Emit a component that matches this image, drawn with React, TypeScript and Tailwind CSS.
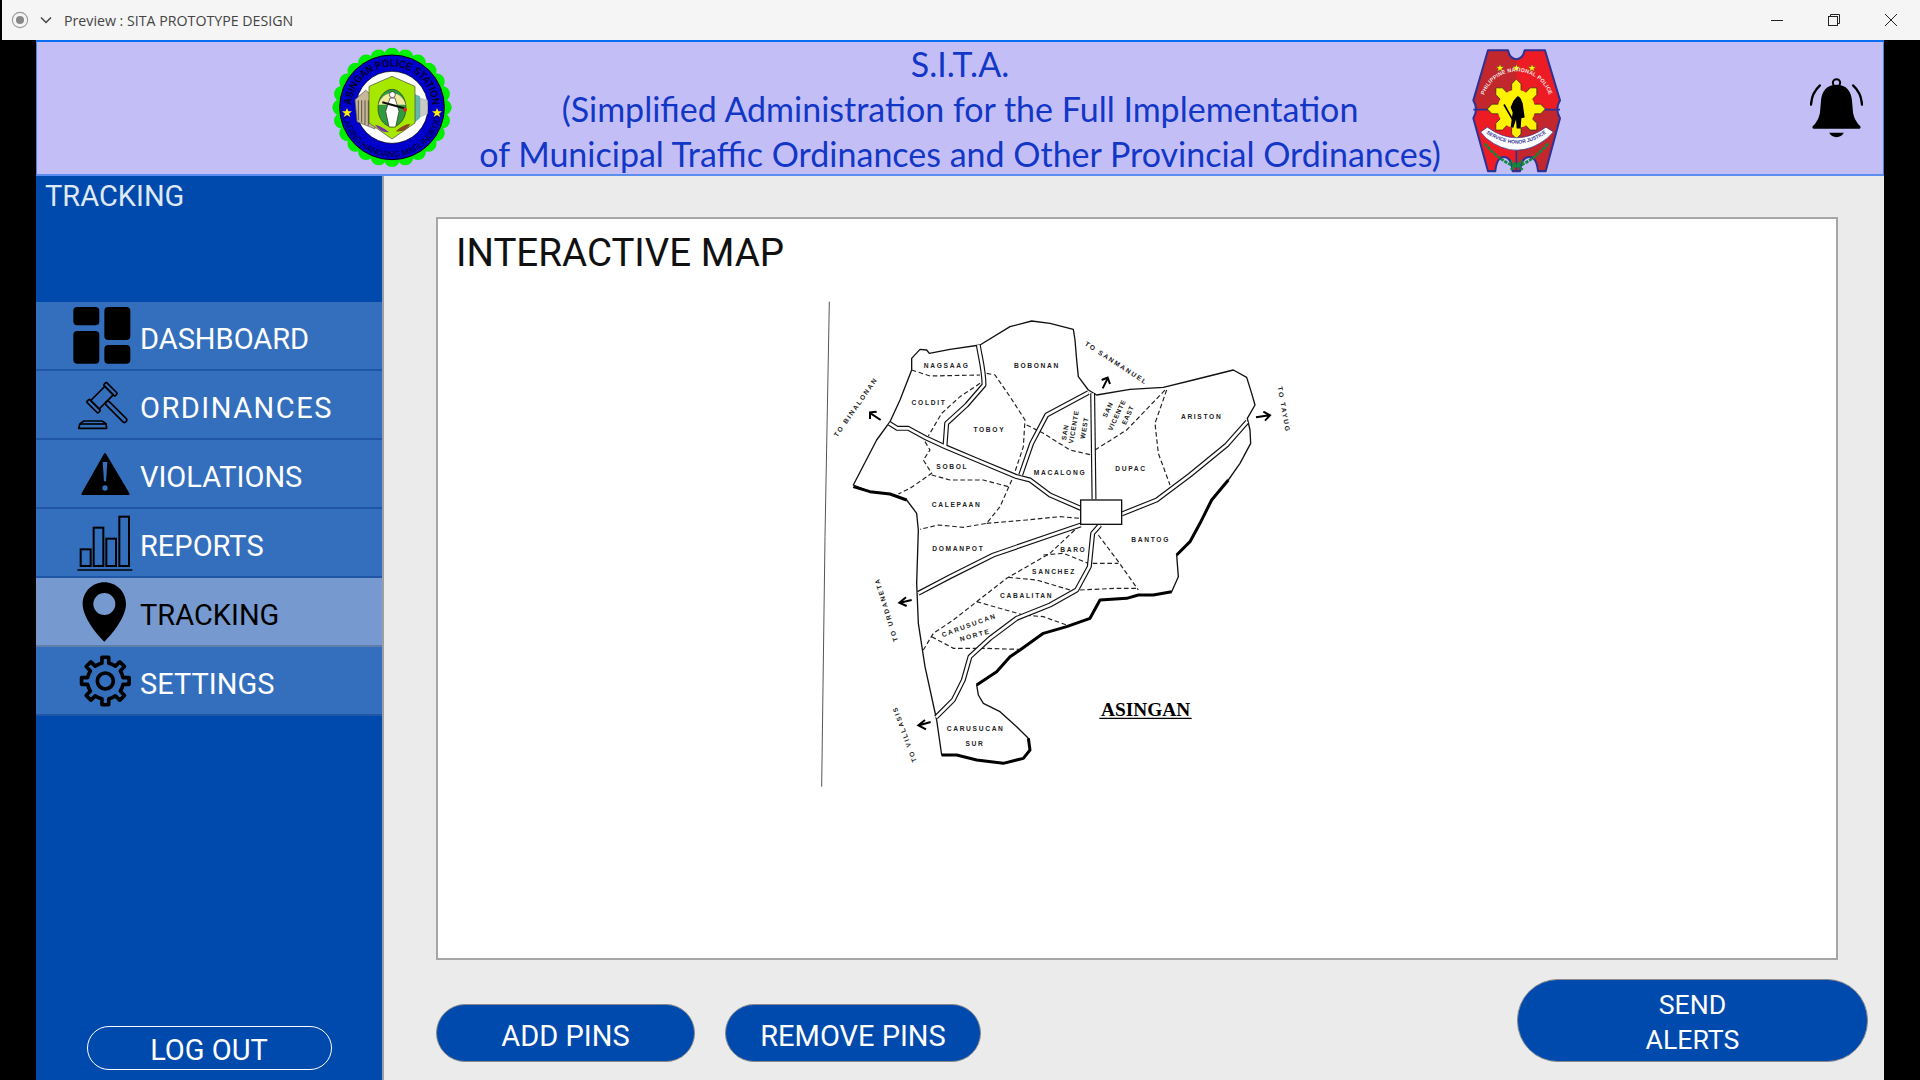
import React from 'react';

const navItems = ['DASHBOARD', 'ORDINANCES', 'VIOLATIONS', 'REPORTS', 'TRACKING', 'SETTINGS'];

// gear outline built from 8 teeth
const gearPath = (cx: number, cy: number, outer: number, inner: number) => {
  const pts: string[] = [];
  const teeth = 8;
  for (let i = 0; i < teeth; i++) {
    const a = (i * 360) / teeth - 90;
    const offs: [number, number][] = [
      [-22.5, inner],
      [-11, inner],
      [-8, outer],
      [8, outer],
      [11, inner],
    ];
    offs.forEach(([d, r]) => {
      const t = ((a + d) * Math.PI) / 180;
      pts.push(`${(cx + r * Math.cos(t)).toFixed(1)},${(cy + r * Math.sin(t)).toFixed(1)}`);
    });
  }
  return `M${pts.join(' L')} Z`;
};

const NavIcon = ({ name }: { name: string }) => {
  const cls = 'w-[62px] h-[68px] shrink-0 overflow-visible';
  if (name === 'DASHBOARD') {
    return (
      <svg viewBox="0 0 186 204" className={cls}>
        <rect x="10" y="15" width="78" height="55" rx="12" />
        <rect x="103" y="15" width="78" height="99" rx="12" />
        <rect x="10" y="87" width="78" height="98" rx="12" />
        <rect x="103" y="129" width="78" height="56" rx="12" />
      </svg>
    );
  }
  if (name === 'ORDINANCES') {
    return (
      <svg viewBox="0 0 186 204" className={cls} fill="none" stroke="#000" strokeWidth="5" strokeLinejoin="round">
        <g transform="translate(96 80) rotate(45)">
          <rect x="-18" y="-30" width="36" height="60" />
          <rect x="-24" y="-42" width="48" height="12" rx="3" />
          <rect x="-24" y="30" width="48" height="12" rx="3" />
          <rect x="18" y="-7" width="84" height="14" rx="7" />
        </g>
        <path d="M26,172 L110,172 L108,158 L96,150 L42,150 L30,158 Z" />
        <path d="M30,159 L108,159" />
      </svg>
    );
  }
  if (name === 'VIOLATIONS') {
    return (
      <svg viewBox="0 0 186 204" className={cls}>
        <path d="M105,42 L176,162 L37,162 Z" stroke="#000" strokeWidth="6" strokeLinejoin="round" />
        <path d="M98,66 L112,66 L108,124 L102,124 Z" fill="#346fbd" />
        <circle cx="105" cy="144" r="8" fill="#346fbd" />
      </svg>
    );
  }
  if (name === 'REPORTS') {
    return (
      <svg viewBox="0 0 186 204" className={cls} fill="none" stroke="#000" strokeWidth="6">
        <rect x="32" y="121" width="30" height="50" />
        <rect x="71" y="56" width="29" height="115" />
        <rect x="109" y="89" width="29" height="82" />
        <rect x="148" y="23" width="29" height="148" />
        <path d="M22,183 L187,183" strokeWidth="5" />
      </svg>
    );
  }
  if (name === 'TRACKING') {
    return (
      <svg viewBox="0 0 186 204" className={cls}>
        <path
          fillRule="evenodd"
          d="M103,13 C139,13 168,42 168,78 C168,118 125,170 103,191 C81,170 38,118 38,78 C38,42 67,13 103,13 Z M103,45 A33,33 0 1 0 103,111 A33,33 0 1 0 103,45 Z"
        />
      </svg>
    );
  }
  return (
    <svg viewBox="0 0 186 204" className={cls} fill="none" stroke="#000" strokeLinejoin="round">
      <path d={gearPath(106, 102, 72, 54)} strokeWidth="11" />
      <circle cx="106" cy="102" r="24" strokeWidth="11" />
    </svg>
  );
};

const Seal = () => {
  const scallops = Array.from({ length: 24 }, (_, i) => {
    const t = (i * 15 * Math.PI) / 180;
    return { x: 201 + 155 * Math.cos(t), y: 193 + 155 * Math.sin(t) };
  });
  return (
    <svg viewBox="0 0 402 390" className="w-[134px] h-[130px] shrink-0 -ml-[8px] -mr-[8px] font-['Liberation_Sans',sans-serif]">
      <defs>
        <path id="seal-top" d="M79,193 A122,122 0 1 1 323,193" />
        <path id="seal-bottom" d="M52,193 A149,149 0 0 0 350,193" />
      </defs>
      {scallops.map((s, i) => (
        <circle key={i} cx={s.x} cy={s.y} r="24" fill="#00ee00" />
      ))}
      <circle cx="201" cy="193" r="157" fill="#0000cc" stroke="#000" strokeWidth="3" />
      <circle cx="201" cy="193" r="108" fill="#fff" stroke="#000" strokeWidth="2" />
      <text fontSize="32" fontWeight="700" fill="#00002a">
        <textPath href="#seal-top" startOffset="50%" textAnchor="middle" textLength={370} lengthAdjust="spacingAndGlyphs">
          ASINGAN POLICE STATION
        </textPath>
      </text>
      <text fontSize="26" fill="#00002a">
        <textPath href="#seal-bottom" startOffset="50%" textAnchor="middle" textLength={410} lengthAdjust="spacingAndGlyphs">
          LAGING HANDANG MAGLINGKOD
        </textPath>
      </text>
      <polygon points="66,195 70,205 81,205 72,212 76,222 66,216 56,222 60,212 51,205 62,205" fill="#ffee00" />
      <polygon points="336,195 340,205 351,205 342,212 346,222 336,216 326,222 330,212 321,205 332,205" fill="#ffee00" />
      {/* building */}
      <path d="M90,170 L122,142 L150,165 L150,258 L96,236 Z" fill="#c9b79a" stroke="#554" strokeWidth="2" />
      <path d="M100,172 V232 M110,172 V238 M120,172 V244 M130,172 V248" stroke="#554" strokeWidth="3" />
      {/* tower */}
      <path d="M262,150 L285,160 L285,225 L262,245 Z" fill="#5fb8a8" />
      <path d="M285,165 L308,172 L308,212 L285,222 Z" fill="#c8ccc8" stroke="#888" />
      {/* shield */}
      <path d="M201,100 L270,130 L270,240 L201,288 L132,240 L132,130 Z" fill="#a6e800" stroke="#444" strokeWidth="2" />
      <ellipse cx="201" cy="195" rx="42" ry="56" fill="#2f9b3f" stroke="#333" strokeWidth="2" />
      <path d="M160,185 A42,44 0 0 1 242,185 Z" fill="#f3e9a0" />
      <path d="M195,165 L210,165 L222,205 L212,252 L192,252 L182,205 Z" fill="#fff" stroke="#222" strokeWidth="2" />
      <circle cx="202" cy="155" r="9" fill="#fff" stroke="#222" strokeWidth="2" />
      <path d="M172,178 L238,196" stroke="#111" strokeWidth="6" />
      <circle cx="240" cy="200" r="6" fill="#d22" />
      <path d="M150,245 Q172,250 192,268 Q165,268 150,245 Z" fill="#7a2fb0" />
      <path d="M212,265 Q232,245 256,242 Q245,268 212,265 Z" fill="#8a4a20" />
    </svg>
  );
};

const Badge = () => (
  <svg viewBox="0 0 312 396" preserveAspectRatio="none" className="w-[104px] h-[136px] shrink-0 -ml-[5px] mt-[3px] font-['Liberation_Sans',sans-serif]">
    <defs>
      <path id="pnp-arc" d="M54,190 A104,104 0 1 1 262,190" />
      <path id="pnp-ribbon" d="M62,262 Q157,330 252,262" />
      <clipPath id="pnp-clip">
        <path d="M72,24 L132,24 Q138,50 157,50 Q176,50 182,24 L243,24 L288,170 Q272,195 288,222 L245,376 L222,376 Q218,335 195,335 Q172,335 168,376 L146,376 Q142,335 120,335 Q98,335 94,376 L72,376 L28,222 Q44,195 28,170 Z" />
      </clipPath>
    </defs>
    <path
      d="M72,24 L132,24 Q138,50 157,50 Q176,50 182,24 L243,24 L288,170 Q272,195 288,222 L245,376 L222,376 Q218,335 195,335 Q172,335 168,376 L146,376 Q142,335 120,335 Q98,335 94,376 L72,376 L28,222 Q44,195 28,170 Z"
      fill="#ed1c24"
    />
    <g clipPath="url(#pnp-clip)">
      <rect x="0" y="0" width="157" height="197" fill="#c1272d" />
      <rect x="157" y="197" width="157" height="200" fill="#c1272d" />
    </g>
    <path d="M28,197 H288 M157,270 V376" stroke="#2e3192" strokeWidth="5" />
    <path
      d="M72,24 L132,24 Q138,50 157,50 Q176,50 182,24 L243,24 L288,170 Q272,195 288,222 L245,376 L222,376 Q218,335 195,335 Q172,335 168,376 L146,376 Q142,335 120,335 Q98,335 94,376 L72,376 L28,222 Q44,195 28,170 Z"
      fill="none"
      stroke="#2e3192"
      strokeWidth="6"
      strokeLinejoin="round"
    />
    {[108, 157, 204].map((x) => (
      <polygon
        key={x}
        points={`${x},64 ${x + 3},72 ${x + 12},72 ${x + 5},78 ${x + 8},86 ${x},81 ${x - 8},86 ${x - 5},78 ${x - 12},72 ${x - 3},72`}
        fill="#fff200"
        stroke="#333"
      />
    ))}
    <text fontSize="16" fontWeight="700" fill="#f6e6e6" letterSpacing="0.6">
      <textPath href="#pnp-arc" startOffset="50%" textAnchor="middle">PHILIPPINE NATIONAL POLICE</textPath>
    </text>
    {[0, 45, 90, 135, 180, 225, 270, 315].map((a) => (
      <polygon
        key={a}
        points="143,145 143,122 157,108 171,122 171,145"
        fill="#fff200"
        stroke="#222"
        strokeWidth="2"
        transform={`rotate(${a} 157 195)`}
      />
    ))}
    <circle cx="157" cy="195" r="56" fill="#fff200" />
    <path d="M160,158 C170,158 172,170 176,178 L182,220 L172,222 L170,252 L158,252 L156,226 L148,250 L140,248 L146,205 L140,190 L148,172 Z" />
    <path d="M120,182 L146,226" stroke="#000" strokeWidth="5" />
    <path d="M50,262 L70,248 Q157,310 246,248 L268,262 L250,280 Q157,350 66,280 Z" fill="#fff" stroke="#2e3192" strokeWidth="2" />
    <text fontSize="15" fontWeight="700" fill="#2e3192">
      <textPath href="#pnp-ribbon" startOffset="50%" textAnchor="middle">SERVICE HONOR JUSTICE</textPath>
    </text>
    <path d="M62,296 Q100,340 150,362 M252,296 Q214,340 164,362 M140,372 L176,346 M176,372 L140,346" fill="none" stroke="#0f8a3c" strokeWidth="8" strokeDasharray="10 3" />
  </svg>
);

const Bell = () => (
  <svg viewBox="0 0 160 180" className="w-[53px] h-[60px] shrink-0">
    <path d="M80,20 C50,20 35,40 33,70 L30,105 Q25,130 8,145 Q5,153 15,153 L145,153 Q155,153 152,145 Q135,130 130,105 L127,70 C125,40 110,20 80,20 Z" />
    <circle cx="80" cy="14" r="11" fill="none" stroke="#000" strokeWidth="6" />
    <path d="M58,165 L102,165 Q95,178 80,178 Q65,178 58,165 Z" />
    <path d="M30,22 Q5,45 3,80 M130,22 Q155,45 157,80" fill="none" stroke="#000" strokeWidth="7" strokeLinecap="round" />
  </svg>
);

// text, x, y, rotation, letter spacing
const labels: [string, number, number, number, number][] = [
  ['NAGSAAG', 410, 233, 0, 5],
  ['BOBONAN', 681, 235, 0, 5],
  ['COLDIT', 357, 345, 0, 5],
  ['TOBOY', 538, 426, 0, 5],
  ['SOBOL', 427, 538, 0, 5],
  ['MACALONG', 750, 556, 0, 5],
  ['DUPAC', 963, 543, 0, 5],
  ['ARISTON', 1175, 388, 0, 5],
  ['CALEPAAN', 440, 650, 0, 5],
  ['DOMANPOT', 445, 783, 0, 5],
  ['BANTOG', 1022, 755, 0, 5],
  ['BARO', 790, 786, 0, 5],
  ['SANCHEZ', 732, 853, 0, 5],
  ['CABALITAN', 650, 925, 0, 5],
  ['CARUSUCAN', 480, 1012, -20, 5],
  ['NORTE', 497, 1042, -15, 5],
  ['CARUSUCAN', 497, 1324, 0, 5],
  ['SUR', 495, 1368, 0, 5],
  ['SAN', 772, 428, -80, 2],
  ['VICENTE', 798, 412, -80, 2],
  ['WEST', 830, 415, -80, 2],
  ['SAN', 900, 362, -65, 2],
  ['VICENTE', 927, 378, -65, 2],
  ['EAST', 960, 378, -65, 2],
  ['TO BINALONAN', 143, 355, -55, 5],
  ['TO SANMANUEL', 915, 225, 33, 5],
  ['TO TAYUG', 1415, 360, 80, 5],
  ['TO URDANETA', 235, 957, -107, 5],
  ['TO VILLASIS', 290, 1330, -110, 5],
];

const roads = [
  'M505,165 C510,200 522,240 522,285 L470,345 L410,400 L405,468',
  'M238,400 L262,415 L295,415 L350,445 L405,470 L500,510 L620,560 L660,570 L720,615 L812,655',
  'M632,555 L665,460 L710,375 L835,308',
  'M848,310 L852,628',
  'M935,672 L1040,630 L1140,555 L1250,465 L1312,395',
  'M325,910 L420,860 L550,795 L812,705',
  'M870,705 L848,730 L838,830 L800,900 L720,945 L620,985 L540,1045 L480,1100 L460,1170 L430,1230 L378,1282',
];

const dashes = [
  'M305,240 L360,258 L510,255',
  'M510,280 L450,320 L395,370 L355,438',
  'M530,250 L555,255 L600,320 L645,390 L640,470 L610,560 L570,650 L530,700 L460,712 L385,705 L330,718',
  'M650,405 L700,430 L780,480 L845,495',
  'M855,480 L950,420 L1070,295',
  'M1070,300 L1035,400 L1045,490 L1080,585',
  'M345,455 L360,480 L340,510 L365,550 L300,595 L265,612',
  'M365,555 L420,570 L520,570 L595,590',
  'M530,700 L650,690 L750,680 L810,685',
  'M810,705 L720,790 L590,865 L500,935 L430,990 L370,1030 L340,1080',
  'M700,795 L760,790 L835,820 L925,820',
  'M595,862 L680,870 L780,900',
  'M810,900 L920,895 L985,895',
  'M865,735 L925,815 L985,900',
  'M500,935 L640,975 L700,980 L770,1005',
  'M365,1040 L430,1075 L520,1075 L630,1078',
];

const AsinganMap = () => (
  <svg viewBox="0 0 1500 1500" className="w-[500px] h-[500px] ml-[372px] font-['Liberation_Sans',sans-serif]">
    <path d="M58,35 L45,740 L35,1490" fill="none" stroke="#555" strokeWidth="3" />
    <path
      d="M305,240 L305,205 L330,178 L350,180 L358,190 L420,178 L510,165 L600,110 L665,93 L720,100 L790,118 L795,150 L800,210 L805,260 L835,300 L860,315 L960,298 L1060,292 L1150,270 L1270,240 L1310,262 L1325,310 L1335,345 L1312,385 L1320,420 L1322,460 L1290,520 L1255,570 L1205,630 L1170,700 L1140,755 L1100,795 L1105,860 L1085,905 L1030,915 L985,915 L950,925 L870,930 L840,985 L770,1010 L700,1030 L630,1080 L600,1100 L560,1145 L500,1185 L505,1215 L520,1240 L570,1265 L620,1310 L655,1345 L660,1380 L640,1405 L580,1420 L500,1410 L440,1395 L395,1395 L380,1290 L345,1130 L325,1000 L320,880 L325,720 L320,670 L290,630 L240,612 L180,605 L130,585 L200,450 L240,395 L270,330 Z"
      fill="#fff"
      stroke="#111"
      strokeWidth="4"
      strokeLinejoin="round"
    />
    {/* heavier shoreline sections */}
    <path
      d="M1255,570 L1205,630 L1170,700 L1140,755 L1100,795 M1085,905 L1030,915 L985,915 L950,925 L870,930 L840,985 L770,1010 L700,1030 L630,1080 L600,1100 L560,1145 L500,1185 M655,1345 L660,1380 L640,1405 L580,1420 L500,1410 L440,1395 L395,1395 M130,590 L180,605 L240,612 L290,630"
      fill="none"
      stroke="#000"
      strokeWidth="9"
      strokeLinejoin="round"
    />
    {dashes.map((d, i) => (
      <path key={i} d={d} fill="none" stroke="#222" strokeWidth="3.5" strokeDasharray="14 8" />
    ))}
    {roads.map((d, i) => (
      <path key={i} d={d} fill="none" stroke="#111" strokeWidth="15" strokeLinejoin="round" />
    ))}
    {roads.map((d, i) => (
      <path key={i} d={d} fill="none" stroke="#fff" strokeWidth="8" strokeLinejoin="round" />
    ))}
    <rect x="812" y="630" width="123" height="73" fill="#fff" stroke="#111" strokeWidth="4" />
    {/* direction arrows */}
    <path
      d="M212,390 L182,370 M180,387 L180,367 L200,365 M878,295 L893,265 M875,270 L893,263 L900,282 M1338,382 L1378,376 M1360,365 L1380,376 L1365,392 M305,930 L270,938 M288,922 L268,938 L290,948 M362,1296 L328,1306 M345,1290 L325,1306 L348,1318"
      fill="none"
      stroke="#000"
      strokeWidth="6"
    />
    {labels.map(([t, x, y, r, ls], i) => (
      <text
        key={i}
        x={x}
        y={y}
        textAnchor="middle"
        fontSize="20"
        fontWeight="700"
        letterSpacing={ls}
        fill="#222"
        transform={r ? `rotate(${r} ${x} ${y})` : undefined}
      >
        {t}
      </text>
    ))}
    <text x="1007" y="1278" textAnchor="middle" fontSize="58" fontWeight="700" fill="#000" className="font-['Liberation_Serif',serif]">
      ASINGAN
    </text>
    <path d="M868,1285 H1145" stroke="#000" strokeWidth="4" />
  </svg>
);

export default function App() {
  return (
    <div className="w-[1920px] h-[1080px] bg-black overflow-hidden flex flex-col font-['Roboto',sans-serif]">
      {/* window title bar */}
      <div className="h-10 ml-[2px] shrink-0 bg-[#f5f5f5] flex items-center text-[#444] font-['Open_Sans',sans-serif]">
        <svg viewBox="0 0 20 20" className="w-[18px] h-[18px] ml-[9px]">
          <circle cx="10" cy="10" r="8.5" fill="none" stroke="#999" strokeWidth="1.2" />
          <circle cx="10" cy="10" r="4.5" fill="#888" />
        </svg>
        <svg viewBox="0 0 12 12" className="w-3 h-3 ml-[11px]" fill="none" stroke="#444" strokeWidth="1.5">
          <path d="M1,3.5 L6,8.5 L11,3.5" />
        </svg>
        <span className="ml-[12px] pt-[2px] text-[14.2px]">Preview : SITA PROTOTYPE DESIGN</span>
        <div className="ml-auto flex items-center">
          <svg viewBox="0 0 12 12" className="w-3 h-3 mr-[45px]" fill="none" stroke="#222">
            <path d="M0,6.5 H12" />
          </svg>
          <svg viewBox="0 0 12 12" className="w-3 h-3 mr-[45px]" fill="none" stroke="#222">
            <rect x="0.5" y="2.5" width="9" height="9" />
            <path d="M2.5,2.5 V0.5 H11.5 V9.5 H9.5" />
          </svg>
          <svg viewBox="0 0 12 12" className="w-3 h-3 mr-[23px]" fill="none" stroke="#222">
            <path d="M0,0 L12,12 M12,0 L0,12" />
          </svg>
        </div>
      </div>

      <div className="flex-1 ml-[36px] w-[1848px] flex flex-col min-h-0">
        {/* header */}
        <header className="h-[136px] shrink-0 bg-[#c3bff6] border-t-2 border-b-2 border-x border-t-[#0a6cf0] border-b-[#5c8ef0] border-x-[#4a80ee] flex items-center pl-[296px]">
          <Seal />
          <div className="w-[1018px] shrink-0 text-center text-[#1237c6] text-[34px] leading-[45px] font-['Lato',sans-serif] whitespace-nowrap">
            <div>S.I.T.A.</div>
            <div>(Simplified Administration for the Full Implementation</div>
            <div>of Municipal Traffic Ordinances and Other Provincial Ordinances)</div>
          </div>
          <Badge />
          <div className="ml-auto mr-[20px]">
            <Bell />
          </div>
        </header>

        <div className="flex-1 flex min-h-0">
          {/* sidebar */}
          <aside className="w-[348px] shrink-0 bg-[#004aad] border-r-2 border-[#9a9ea6] flex flex-col">
            <div className="h-[126px] shrink-0 pl-[9px] pt-[2px] text-[#dfe8f5] text-[29px] leading-[36px]">TRACKING</div>
            {navItems.map((item) => (
              <div
                key={item}
                className={
                  item === 'TRACKING'
                    ? 'h-[69px] shrink-0 border-b-2 border-[#5f7ea8] bg-[#769ad0] text-black flex items-center pl-[34px] gap-[8px]'
                    : 'h-[69px] shrink-0 border-b-2 border-[#1f56a5] bg-[#346fbd] text-white flex items-center pl-[34px] gap-[8px]'
                }
              >
                <NavIcon name={item} />
                <span className={item === 'ORDINANCES' ? 'text-[29px] leading-none pt-[7px] tracking-[1.5px]' : 'text-[29px] leading-none pt-[7px]'}>
                  {item}
                </span>
              </div>
            ))}
            <button className="mt-auto mb-[10px] mx-auto w-[245px] h-[44px] pt-[4px] rounded-[22px] border border-white text-white text-[29px] leading-none">
              LOG OUT
            </button>
          </aside>

          {/* main area */}
          <main className="flex-1 bg-[#ebebeb] pl-[52px] pt-[41px] min-w-0">
            <section className="w-[1402px] h-[743px] bg-white border-2 border-[#a6a6a6]">
              <h1 className="h-[71px] pl-[18px] pt-[11px] text-[38.5px] leading-[46px] text-[#111]">INTERACTIVE MAP</h1>
              <AsinganMap />
            </section>
            <div className="h-[83px] mt-[19px] flex items-end">
              <button className="w-[259px] h-[58px] pt-[7px] rounded-[29px] bg-[#004aad] border border-[#8a8a8a] text-white text-[29px] leading-none">
                ADD PINS
              </button>
              <button className="w-[256px] h-[58px] ml-[30px] pt-[7px] rounded-[29px] bg-[#004aad] border border-[#8a8a8a] text-white text-[29px] leading-none">
                REMOVE PINS
              </button>
              <button className="w-[351px] h-[83px] ml-[536px] pt-[4px] rounded-[41px] bg-[#004aad] border border-[#8a8a8a] text-white text-[26.67px] leading-[35px]">
                SEND
                <br />
                ALERTS
              </button>
            </div>
          </main>
        </div>
      </div>
    </div>
  );
}
